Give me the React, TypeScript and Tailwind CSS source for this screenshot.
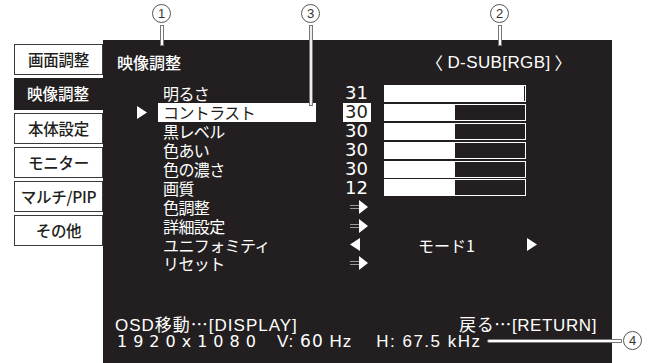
import React from "react";

const JP = { fontFamily: '"Liberation Sans", "Noto Sans CJK JP", sans-serif' };
const CJK = { fontFamily: '"Noto Sans CJK JP", sans-serif' };
const NUM = { fontFamily: '"DejaVu Sans", "Liberation Sans", sans-serif' };

function TriRight({ w = 10, h = 12, color = "#fff" }: { w?: number; h?: number; color?: string }) {
  return (
    <svg width={w} height={h} viewBox={`0 0 ${w} ${h}`} className="block">
      <polygon points={`0,0 ${w},${h / 2} 0,${h}`} fill={color} />
    </svg>
  );
}
function TriLeft({ w = 10, h = 12, color = "#fff" }: { w?: number; h?: number; color?: string }) {
  return (
    <svg width={w} height={h} viewBox={`0 0 ${w} ${h}`} className="block">
      <polygon points={`${w},0 0,${h / 2} ${w},${h}`} fill={color} />
    </svg>
  );
}

function SubArrow() {
  return (
    <div className="flex items-center">
      <div className="flex flex-col gap-[2px] w-[9px]">
        <div className="h-[1px] bg-[#9a9a9a]" />
        <div className="h-[1px] bg-[#9a9a9a]" />
      </div>
      <TriRight w={9} h={14} />
    </div>
  );
}

function Bar({ fill }: { fill: number }) {
  return (
    <div className="w-[142px] h-[17px] border-[1.5px] border-white bg-[#231f20] flex">
      <div className="h-full bg-white" style={{ width: fill }} />
    </div>
  );
}

type Row = {
  label: string;
  value?: string;
  fill?: number;
  active?: boolean;
  kind?: "bar" | "sub" | "mode";
};

const rows: Row[] = [
  { label: "明るさ", value: "31", fill: 139, kind: "bar" },
  { label: "コントラスト", value: "30", fill: 70, kind: "bar", active: true },
  { label: "黒レベル", value: "30", fill: 70, kind: "bar" },
  { label: "色あい", value: "30", fill: 70, kind: "bar" },
  { label: "色の濃さ", value: "30", fill: 70, kind: "bar" },
  { label: "画質", value: "12", fill: 70, kind: "bar" },
  { label: "色調整", kind: "sub" },
  { label: "詳細設定", kind: "sub" },
  { label: "ユニフォミティ", kind: "mode" },
  { label: "リセット", kind: "sub" },
];

const tabs = ["画面調整", "映像調整", "本体設定", "モニター", "マルチ/PIP", "その他"];

function Callout({ n }: { n: string }) {
  return (
    <div className="w-[19px] h-[19px] rounded-full border border-[#555] bg-white flex items-center justify-center text-[13px] leading-none text-[#333]" style={JP}>
      {n}
    </div>
  );
}

export default function App() {
  return (
    <div className="relative w-[659px] h-[363px] bg-white overflow-hidden" style={JP}>
      <div className="h-[40px]" />
      <div className="flex">
        {/* tabs */}
        <div className="ml-[14px] w-[89px] flex flex-col gap-[3px] pt-[4px]" style={CJK}>
          {tabs.map((t, i) =>
            i === 1 ? (
              <div key={t} className="h-[32px] bg-[#231f20] text-white flex items-center pl-[13px] text-[15.5px] font-medium leading-none">
                {t}
              </div>
            ) : (
              <div key={t} className="h-[31px] border-[1.5px] border-[#3a3a3a] bg-white text-[#231f20] flex items-center justify-center text-[15.5px] font-medium whitespace-nowrap tracking-[-0.3px] leading-none">
                {t}
              </div>
            )
          )}
        </div>
        {/* panel */}
        <div className="w-[509px] h-[323px] bg-[#231f20] text-white flex flex-col">
          <div className="flex items-center justify-between h-[20px] mt-[12px] pl-[14px] pr-[40px]">
            <span className="text-[16px] font-medium leading-none" style={CJK}>映像調整</span>
            <span className="text-[17px] flex items-center tracking-[0.4px] leading-none">
              <span className="mr-[4px]" style={CJK}>〈</span>
              D-SUB[RGB]
              <span className="ml-[4px]" style={CJK}>〉</span>
            </span>
          </div>
          <div className="mt-[12px] flex flex-col">
            {rows.map((r) => (
              <div key={r.label} className="h-[18.9px] flex items-center">
                <div className="ml-[34px] w-[21px] flex items-center">
                  {r.active && <TriRight w={10} h={13} />}
                </div>
                <div className={`w-[158px] h-[18.9px] flex items-center pl-[5px] text-[16px] tracking-[-0.6px] leading-none ${r.active ? "bg-white text-[#231f20]" : ""}`} style={CJK}>
                  {r.label}
                </div>
                <div className="ml-[27px] flex items-center">
                  {r.kind === "bar" && (
                    <>
                      <div className={`w-[28px] h-[18.9px] flex items-center justify-end pr-[3px] text-[18px] leading-none ${r.active ? "bg-white text-[#231f20]" : ""}`} style={NUM}>
                        {r.value}
                      </div>
                      <div className="ml-[13px]">
                        <Bar fill={r.fill ?? 0} />
                      </div>
                    </>
                  )}
                  {r.kind === "sub" && (
                    <div className="ml-[7px]">
                      <SubArrow />
                    </div>
                  )}
                  {r.kind === "mode" && (
                    <div className="ml-[7px] flex items-center">
                      <TriLeft w={10} h={13} />
                      <span className="ml-[58px] w-[109px] text-[16px] leading-none" style={CJK}>モード1</span>
                      <TriRight w={10} h={13} />
                    </div>
                  )}
                </div>
              </div>
            ))}
          </div>
          <div className="mt-auto pb-[13px] flex flex-col">
            <div className="h-[17px] flex items-center justify-between pl-[12px] pr-[15px] text-[17px] leading-none">
              <span className="tracking-[1px]">
                OSD移動<span style={CJK}>…</span>[DISPLAY]
              </span>
              <span className="tracking-[0.6px]">
                戻る<span style={CJK}>…</span>[RETURN]
              </span>
            </div>
            <div className="h-[17px] flex items-center pl-[14px] text-[17px] leading-none">
              <span className="text-[16px] tracking-[6px]" style={NUM}>1920x1080</span>
              <span className="ml-[15px] tracking-[1px]">V: <span style={NUM}>60</span> Hz</span>
              <span className="ml-[24px] tracking-[1.5px]">H: 67.5 kHz</span>
            </div>
          </div>
        </div>
      </div>

      {/* callouts */}
      <div className="absolute left-[152px] top-[4px] flex flex-col items-center">
        <Callout n="1" />
        <div className="mt-[2px] w-[4px] h-[21px] border border-[#777] bg-white" />
      </div>
      <div className="absolute left-[301px] top-[4px] flex flex-col items-center">
        <Callout n="3" />
        <div className="mt-[2px] w-[4px] h-[81px] border border-[#777] bg-[#eee]" />
      </div>
      <div className="absolute left-[490px] top-[4px] flex flex-col items-center">
        <Callout n="2" />
        <div className="mt-[2px] w-[4px] h-[21px] border border-[#777] bg-white" />
      </div>
      <div className="absolute left-[487px] top-[331px] flex items-center">
        <div className="w-[135px] h-[4px] border border-[#777] bg-white rounded-l-full" />
        <div className="ml-[1px]">
          <Callout n="4" />
        </div>
      </div>
    </div>
  );
}
